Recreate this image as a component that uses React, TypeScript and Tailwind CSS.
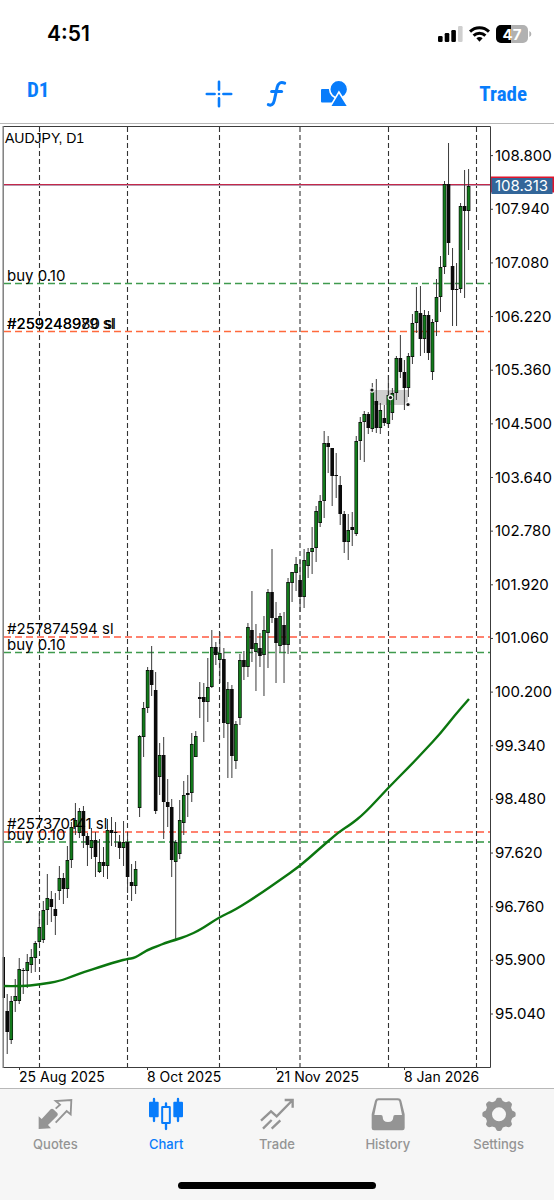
import React from "react";

type Candle = [high: number, low: number, top: number, bottom: number, rising: 0 | 1];

const CANDLES: Candle[] = [
  [957, 998, 957, 998, 0], [994, 1054, 1011, 1032, 0], [996, 1044, 1001, 1040, 1], [979, 1012, 996, 1001, 1],
  [958, 1004, 969, 1001, 1], [968, 994, 970, 971, 0], [954, 988, 962, 971, 1], [949, 973, 957, 965, 1],
  [941, 972, 943, 958, 1], [913, 943, 927, 942, 1], [901, 943, 910, 940, 1], [874, 925, 898, 910, 1],
  [891, 922, 899, 907, 0], [893, 935, 909, 916, 0], [866, 900, 878, 891, 1], [873, 904, 878, 889, 0],
  [846, 898, 860, 889, 1], [822, 868, 827, 860, 1], [803, 835, 820, 827, 1], [808, 838, 811, 833, 1],
  [806, 848, 811, 836, 0], [833, 866, 836, 845, 0], [828, 859, 840, 848, 1], [832, 877, 840, 857, 0],
  [839, 873, 862, 872, 1], [847, 877, 862, 866, 0], [819, 879, 830, 866, 1], [817, 846, 830, 833, 0],
  [822, 847, 832, 833, 0], [835, 859, 842, 848, 0], [821, 866, 842, 848, 1], [832, 893, 842, 877, 0],
  [864, 901, 882, 886, 0], [861, 894, 869, 886, 1], [735, 817, 736, 808, 1], [702, 757, 708, 737, 1],
  [667, 713, 670, 708, 1], [646, 696, 670, 685, 0], [672, 814, 690, 811, 0], [743, 795, 755, 777, 1],
  [737, 839, 755, 802, 0], [779, 827, 802, 807, 0], [799, 877, 807, 860, 0], [840, 939, 842, 862, 1],
  [800, 859, 820, 854, 1], [781, 835, 795, 823, 1], [775, 817, 793, 795, 0], [733, 802, 744, 793, 1],
  [731, 757, 736, 757, 1], [682, 718, 697, 699, 0], [683, 742, 697, 702, 0], [658, 722, 687, 702, 1],
  [630, 688, 647, 687, 1], [642, 665, 647, 655, 0], [632, 683, 653, 660, 1], [648, 738, 659, 723, 0],
  [682, 778, 689, 724, 1], [685, 778, 689, 756, 0], [721, 769, 724, 761, 1], [654, 725, 660, 718, 1],
  [651, 680, 660, 667, 0], [623, 677, 627, 667, 1], [591, 662, 630, 649, 0], [624, 691, 643, 652, 1],
  [633, 667, 648, 656, 0], [616, 696, 630, 655, 1], [589, 668, 592, 633, 1], [549, 623, 592, 618, 0],
  [602, 683, 618, 643, 0], [613, 652, 616, 646, 1], [612, 683, 625, 645, 0], [578, 654, 582, 645, 1],
  [572, 602, 572, 583, 1], [557, 591, 564, 573, 1], [560, 612, 580, 597, 0], [549, 608, 560, 597, 1],
  [548, 578, 552, 566, 1], [527, 574, 548, 552, 1], [506, 562, 511, 548, 1], [495, 527, 501, 523, 1],
  [431, 518, 443, 501, 1], [436, 473, 443, 447, 0], [448, 506, 448, 476, 0], [453, 498, 475, 476, 0],
  [476, 525, 485, 514, 0], [511, 553, 514, 542, 0], [514, 560, 530, 542, 1], [512, 546, 527, 530, 0],
  [436, 536, 441, 534, 1], [417, 460, 422, 441, 1], [411, 462, 414, 422, 1], [412, 434, 414, 428, 0],
  [383, 432, 390, 429, 1], [379, 433, 401, 428, 0], [403, 434, 410, 428, 1], [405, 426, 418, 423, 0],
  [375, 428, 395, 424, 1], [388, 420, 393, 413, 1], [356, 400, 358, 393, 1], [335, 378, 358, 372, 0],
  [360, 410, 372, 388, 0], [353, 397, 356, 388, 1], [314, 364, 323, 357, 1], [287, 333, 311, 323, 1],
  [286, 356, 313, 339, 0], [310, 353, 315, 339, 1], [311, 360, 315, 353, 0], [319, 380, 322, 372, 1],
  [279, 336, 297, 322, 1], [256, 312, 267, 297, 1], [181, 274, 184, 267, 1], [143, 255, 184, 243, 0],
  [248, 326, 266, 290, 0], [263, 326, 289, 290, 0], [203, 293, 206, 289, 1], [170, 298, 206, 211, 0],
  [169, 250, 186, 211, 1],
];

const FIRST_X = 3.2;
const STEP_X = 4.012;
const FIRST_PRICE_Y = 155.6;
const PRICE_STEP_Y = 53.65;

const PRICES = [
  "108.800", "107.940", "107.080", "106.220", "105.360", "104.500", "103.640", "102.780", "101.920",
  "101.060", "100.200", "99.340", "98.480", "97.620", "96.760", "95.900", "95.040",
];

const DATES = [
  { x: 19, label: "25 Aug 2025" },
  { x: 147, label: "8 Oct 2025" },
  { x: 276, label: "21 Nov 2025" },
  { x: 404, label: "8 Jan 2026" },
];

const MONTHS = [39.5, 127.5, 219.5, 300, 388.5, 476.5];

const LEVELS = [
  { y: 283.5, color: "#3f9a4e" },
  { y: 331.5, color: "#ff6a3c" },
  { y: 637, color: "#ff5a40" },
  { y: 652.5, color: "#3f9a4e" },
  { y: 832, color: "#ff5a40" },
  { y: 842, color: "#2f9440" },
];

const ORDER_LABELS = [
  { y: 281, label: "buy 0.10" },
  { y: 329, label: "#259248980 sl" },
  { y: 329, label: "#259248979 sl" },
  { y: 634, label: "#257874594 sl" },
  { y: 650, label: "buy 0.10" },
  { y: 829, label: "#257370141 sl" },
  { y: 840, label: "buy 0.10" },
];

const AVERAGE: [number, number][] = [
  [3, 986], [20, 986.3], [40, 984.6], [60, 981], [73, 976], [85, 971.6], [100, 967], [112, 963], [127, 959],
  [135, 958], [147, 950], [158, 946], [165, 943], [175, 940], [187, 936], [200, 930], [219.6, 917], [235, 910],
  [260, 894], [280, 880], [300, 866], [318, 850], [340, 831], [350, 825], [365, 813], [388, 788], [410, 766],
  [425, 750], [440, 734], [455, 715], [469, 699],
];

const averagePath = (() => {
  let d = `M${AVERAGE[0][0]} ${AVERAGE[0][1]}`;
  for (let i = 1; i < AVERAGE.length - 1; i++) {
    const [x, y] = AVERAGE[i];
    const [nx, ny] = AVERAGE[i + 1];
    d += `Q${x} ${y} ${(x + nx) / 2} ${(y + ny) / 2}`;
  }
  const [lx, ly] = AVERAGE[AVERAGE.length - 1];
  return `${d}L${lx} ${ly}`;
})();

const ANCHORS = [
  [372, 390],
  [390.5, 397.5],
  [408, 404.5],
];

function PriceChart() {
  return (
    <svg
      viewBox="0 124 554 964"
      role="img"
      aria-label="AUDJPY daily candlestick chart"
      className="block w-full font-['Inter',sans-serif] text-[15px]"
    >
      <rect x="372" y="390" width="36" height="15" fill="#cfcfcf" />
      {MONTHS.map((x) => (
        <line key={x} x1={x} x2={x} y1="127" y2="1067" stroke="#333" strokeWidth="1.1" strokeDasharray="5 3" />
      ))}
      {LEVELS.map((l) => (
        <line key={l.y} x1="4" x2="490" y1={l.y} y2={l.y} stroke={l.color} strokeWidth="1.3" strokeDasharray="7 4" />
      ))}
      <line x1="4" x2="490" y1="184.5" y2="184.5" stroke="#c4284a" />
      <line x1="4" x2="490" y1="185.5" y2="185.5" stroke="#b79ab0" />

      {CANDLES.map(([high, low, top, bottom, rising], i) => {
        const x = FIRST_X + i * STEP_X;
        const left = i === 0 ? x : x - 1.8;
        const width = i === 0 ? 1.8 : 3.6;
        const height = Math.max(bottom - top, 1);
        return (
          <g key={i}>
            <line x1={x} x2={x} y1={high} y2={low} stroke="#3a3a3a" />
            <rect x={left} y={top} width={width} height={height} fill="#0a0a0a" />
            {rising === 1 && height > 2 && (
              <rect x={x - 1.2} y={top + 0.8} width="2.4" height={height - 1.6} fill="#127a1b" />
            )}
          </g>
        );
      })}
      <path d={averagePath} fill="none" stroke="#0b760f" strokeWidth="2.4" />

      {ANCHORS.map(([x, y]) => (
        <g key={x}>
          <circle cx={x} cy={y} r="2.8" fill="#f4f4f4" />
          <circle cx={x} cy={y} r="1.6" fill="#111" />
        </g>
      ))}

      <path d="M3 126.5H490.5V1067.5H3" fill="none" stroke="#3c3c3c" />
      <line x1="3.2" x2="3.2" y1="126" y2="1068" stroke="#777" strokeWidth="1.4" />

      <text x="5" y="143" className="font-['Liberation_Sans',sans-serif] text-[14px]">
        AUDJPY, D1
      </text>
      {ORDER_LABELS.map((o) => (
        <text key={o.label + o.y} x="7" y={o.y}>
          {o.label}
        </text>
      ))}
      {PRICES.map((price, i) => {
        const y = FIRST_PRICE_Y + i * PRICE_STEP_Y;
        return (
          <g key={price}>
            <line x1="490" x2="493" y1={y} y2={y} stroke="#3c3c3c" />
            <text x="495" y={y + 5}>
              {price}
            </text>
          </g>
        );
      })}
      <rect x="491" y="176.5" width="63" height="16" fill="#e0142c" />
      <rect x="491.5" y="178" width="61" height="16" fill="#336699" />
      <text x="495" y="191" fill="#fff">
        108.313
      </text>
      {DATES.map((d) => (
        <g key={d.label}>
          <line x1={d.x + 0.5} x2={d.x + 0.5} y1="1067" y2="1070" stroke="#3c3c3c" />
          <text x={d.x} y="1082" className="text-[14px]">
            {d.label}
          </text>
        </g>
      ))}
    </svg>
  );
}

function StatusBar() {
  return (
    <div className="flex h-[68px] items-center justify-between pr-[22px] pl-[47px]">
      <time className="font-['Inter',sans-serif] text-[21px] leading-6 font-semibold">4:51</time>
      <div className="flex items-center gap-[6px]">
        <svg width="25" height="18" viewBox="0 0 25 18" aria-label="Signal">
          <rect x="0" y="11" width="4.6" height="6" rx="1.2" />
          <rect x="6.7" y="8" width="4.6" height="9" rx="1.2" />
          <rect x="13.3" y="5" width="4.6" height="12" rx="1.2" />
          <rect x="20" y="1" width="4.6" height="16" rx="1.2" fill="#cfcfcf" />
        </svg>
        <svg width="21" height="18" viewBox="0 0 21 18" aria-label="Wi-Fi" fill="none" stroke="#000" strokeWidth="3">
          <path d="M1 6.6a13.6 13.6 0 0 1 19 0" />
          <path d="M4.6 10.6a8.6 8.6 0 0 1 11.8 0" />
          <path d="M7.4 13.3a4.6 4.6 0 0 1 6.2 0L10.5 16.7z" fill="#000" stroke="none" />
        </svg>
        <svg width="36" height="18" viewBox="0 0 36 18" className="font-['Inter',sans-serif] text-[15px] font-bold" aria-label="Battery">
          <rect width="32" height="18" rx="5" fill="#b1b1b1" />
          <path d="M5 0H15V18H5a5 5 0 0 1-5-5V5a5 5 0 0 1 5-5z" />
          <path d="M33.3 6a3.2 3.2 0 0 1 0 6z" fill="#b1b1b1" />
          <text x="16" y="14.5" fill="#fff" textAnchor="middle">
            47
          </text>
        </svg>
      </div>
    </div>
  );
}

function Toolbar() {
  return (
    <div className="grid h-[56px] grid-cols-[1fr_auto_1fr] border-b border-[#b8b8b8] px-[27px] font-['Liberation_Sans_Narrow','Roboto_Condensed','Liberation_Sans',sans-serif] font-bold text-[#087cfb]">
      <button type="button" className="h-[44px] justify-self-start text-[21px] leading-6">
        D1
      </button>
      <div className="flex h-[52px] items-center gap-[30px]">
        <button type="button" aria-label="Crosshair">
          <svg width="28" height="28" viewBox="0 0 28 28" stroke="currentColor" strokeWidth="2.6" strokeLinecap="round">
            <path d="M14 1.8V9.6M14 18.4V26.2M1.8 14H9.6M18.4 14H26.2" />
            <circle cx="14" cy="14" r="1.3" fill="currentColor" stroke="none" />
          </svg>
        </button>
        <button type="button" aria-label="Indicators">
          <svg width="28" height="28" viewBox="0 0 28 28" fill="none" stroke="currentColor" strokeWidth="3" strokeLinecap="round">
            <path d="M21.7 3.1C17.8 1.4 15.2 3 14.2 7.2L11.3 20.4C10.4 24.6 8.4 26 5.3 24.6" />
            <path d="M8.6 11.6H18.6" />
          </svg>
        </button>
        <button type="button" aria-label="Objects">
          <svg width="28" height="28" viewBox="0 0 28 28" fill="currentColor">
            <rect x="0" y="9" width="14" height="13.4" rx="1" />
            <circle cx="17.7" cy="9.2" r="9" stroke="#fff" strokeWidth="1.6" />
            <path d="M17.9 12L27 26.7H9.2z" stroke="#fff" strokeWidth="1.6" />
          </svg>
        </button>
      </div>
      <button type="button" className="h-[52px] justify-self-end text-[21px] leading-6">
        Trade
      </button>
    </div>
  );
}

const gearPath = (() => {
  const points: string[] = [];
  for (let i = 0; i < 96; i++) {
    const a = (i / 96) * Math.PI * 2;
    const wave = Math.tanh(2.2 * Math.cos(8 * a)) / Math.tanh(2.2);
    const r = 45.5 + 4.5 * wave;
    points.push(`${(r * Math.cos(a)).toFixed(1)} ${(r * Math.sin(a)).toFixed(1)}`);
  }
  return `M${points.join("L")}ZM21 0A21 21 0 1 0 -21 0A21 21 0 1 0 21 0Z`;
})();

const TABS = [
  {
    label: "Quotes",
    viewBox: "110 170 108 102",
    art: (
      <>
        <path d="M115 228L124 236L151 207Q155 203 159 207L171 218Q174 222 171 226L143 254L152 264L115 266Z" fill="currentColor" />
        <path d="M166 205L179 193L166 182L213 179L211 222L199 212L166 247" fill="none" stroke="currentColor" strokeWidth="5.5" />
      </>
    ),
  },
  {
    label: "Chart",
    viewBox: "444 170 108 102",
    active: true,
    art: (
      <>
        <rect x="447" y="184" width="29" height="47" rx="3" fill="currentColor" />
        <rect x="520" y="184" width="29" height="47" rx="3" fill="currentColor" />
        <rect x="486.5" y="200" width="23" height="48" rx="1" fill="none" stroke="currentColor" strokeWidth="6" />
        <path d="M462 176V242M534 176V242M498 189V199M498 249V266" stroke="currentColor" strokeWidth="7" strokeLinecap="round" />
      </>
    ),
  },
  {
    label: "Trade",
    viewBox: "776 170 108 102",
    art: (
      <path
        d="M782 241L812 213L829 228L877 179M853 179H877V202M788 265L814 239M814 265L840 240"
        fill="none"
        stroke="currentColor"
        strokeWidth="7"
      />
    ),
  },
  {
    label: "History",
    viewBox: "277 170 108 102",
    art: (
      <path
        fillRule="evenodd"
        d="M302 174H361Q369 174 371 181L381 222V263Q381 270 374 270H289Q282 270 282 263V222L292 181Q294 174 302 174ZM304 180Q299 180 298 184L290 224H310Q315 224 315 229Q315 245 331 245Q347 245 347 229Q347 224 352 224H373L365 184Q364 180 359 180Z"
        fill="currentColor"
      />
    ),
  },
  {
    label: "Settings",
    viewBox: "-54 -52 108 102",
    art: <path fillRule="evenodd" d={gearPath} fill="currentColor" />,
  },
];

export default function App() {
  return (
    <div className="flex min-h-screen w-full flex-col bg-white text-black">
      <header>
        <StatusBar />
        <Toolbar />
      </header>
      <main className="flex-1">
        <PriceChart />
      </main>
      <footer className="flex h-[112px] flex-col items-center justify-between border-t border-[#b8b8b8] bg-[#f6f6f6] pt-2 pb-[11px]">
        <nav className="flex w-full font-['Inter',sans-serif] text-[13px] leading-5 font-medium">
          {TABS.map((tab) => (
            <a
              key={tab.label}
              href={`#${tab.label.toLowerCase()}`}
              aria-current={tab.active ? "page" : undefined}
              className={`flex flex-1 flex-col items-center gap-[3px] ${tab.active ? "text-[#087cfb]" : "text-[#949494]"}`}
            >
              <svg width="36" height="34" viewBox={tab.viewBox} aria-hidden="true">
                {tab.art}
              </svg>
              {tab.label}
            </a>
          ))}
        </nav>
        <div className="h-[7px] w-[198px] rounded-full bg-black" />
      </footer>
    </div>
  );
}
